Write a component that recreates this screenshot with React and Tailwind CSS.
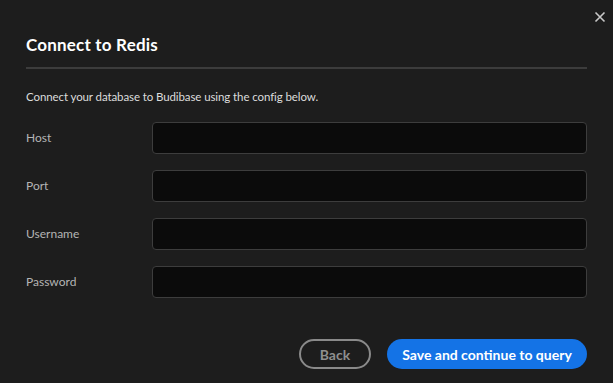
import React from 'react';

const fields = ['Host', 'Port', 'Username', 'Password'];

function App() {
  return (
    <div
      className="w-[613px] h-[383px] bg-[#1d1d1d] relative overflow-hidden"
      style={{ fontFamily: '"Lato", "Open Sans", sans-serif' }}
    >
      <button className="absolute right-[7px] top-[11px] text-[#c8c8c8]">
        <svg width="12" height="12" viewBox="0 0 12 12" fill="none" stroke="currentColor" strokeWidth="1.6">
          <path d="M1.5 1.5 L10.5 10.5 M10.5 1.5 L1.5 10.5" />
        </svg>
      </button>
      <div className="px-[26px] pt-[34px]">
        <h1 className="text-[17px] font-bold text-white leading-[22px] tracking-[0.2px]">Connect to Redis</h1>
        <div className="mt-[11px] h-[2px] bg-[#3c3c3c]" />
        <p className="mt-[20px] text-[11.5px] text-[#dcdcdc] leading-[16px] tracking-[-0.1px]">
          Connect your database to Budibase using the config below.
        </p>
        <div className="mt-[17px] flex flex-col gap-[16px]">
          {fields.map((f) => (
            <div key={f} className="flex items-center">
              <label className="w-[126px] text-[12px] text-[#b4b4b4]">{f}</label>
              <input
                type={f === 'Password' ? 'password' : 'text'}
                className="flex-1 h-[32px] bg-[#0b0b0b] border border-[#3d3d3d] rounded-[4px] outline-none"
              />
            </div>
          ))}
        </div>
        <div className="mt-[41px] flex justify-end gap-[16px]">
          <button className="h-[30px] w-[72px] rounded-full border-2 border-[#8a8a8a] text-[#8f8f8f] text-[14px] font-bold">
            Back
          </button>
          <button className="h-[30px] w-[200px] rounded-full bg-[#1473e6] text-white text-[14px] font-bold">
            Save and continue to query
          </button>
        </div>
      </div>
    </div>
  );
}

export default App;
